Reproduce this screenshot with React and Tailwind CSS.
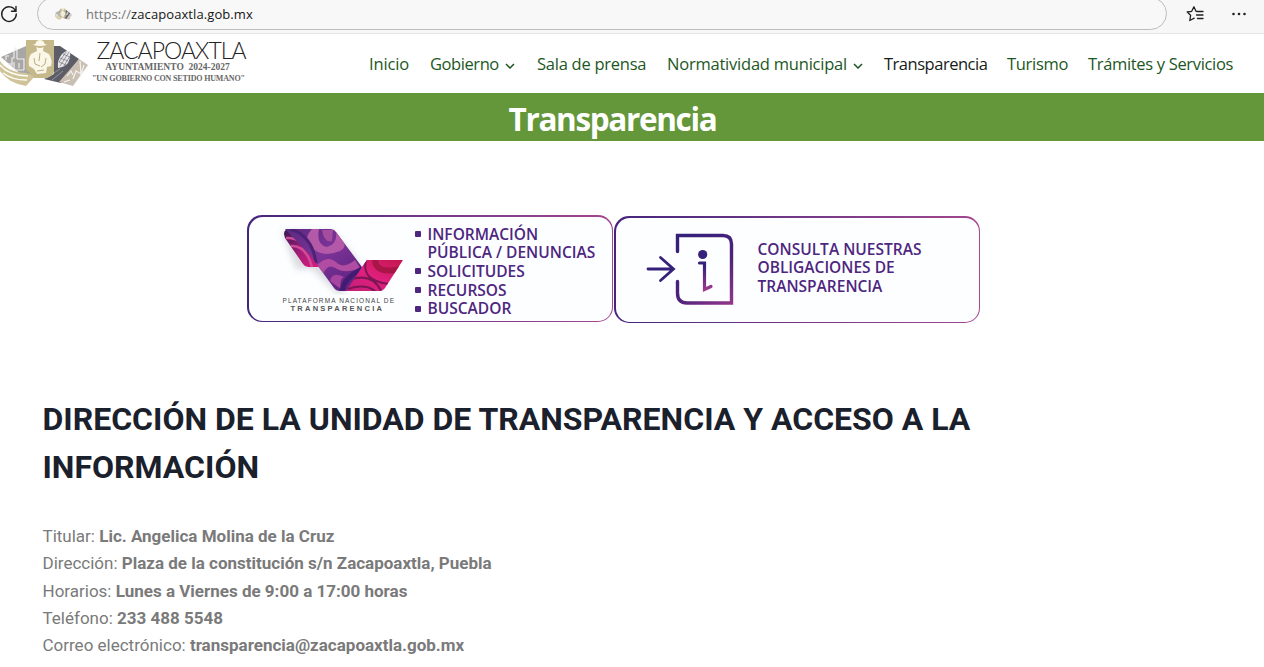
import React from "react";

const NAV = [
  { label: "Inicio", cls: "w-[61px] tracking-[-0.15px]" },
  { label: "Gobierno", cls: "w-[107px] tracking-[-0.42px]", menu: true },
  { label: "Sala de prensa", cls: "w-[130px] tracking-[-0.25px]" },
  { label: "Normatividad municipal", cls: "w-[217px] tracking-[-0.22px]", menu: true },
  { label: "Transparencia", cls: "w-[123px] tracking-[-0.48px]", active: true },
  { label: "Turismo", cls: "w-[81px] tracking-[-0.3px]" },
  { label: "Trámites y Servicios", cls: "w-[176px] tracking-[-0.33px]" },
];

const INFO = [
  ["Titular:", "Lic. Angelica Molina de la Cruz"],
  ["Dirección:", "Plaza de la constitución s/n Zacapoaxtla, Puebla"],
  ["Horarios:", "Lunes a Viernes de 9:00 a 17:00 horas"],
  ["Teléfono:", "233 488 5548"],
  ["Correo electrónico:", "transparencia@zacapoaxtla.gob.mx"],
];

function Emblem({ className }) {
  return (
    <svg viewBox="0 0 88 50" className={className} preserveAspectRatio="none">
      <path d="M1 20 L26 9 V31 L34 40 L24 40 Z" fill="#a8a7a6" />
      <path d="M0 24 Q7 35 26 36 L35 39 L26 49 Q8 46 0 34 Z" fill="#cfc39a" />
      <path d="M0 28 Q8 38 28 39 M3 36 Q12 43 27 43" stroke="#fffdf4" strokeWidth="1.5" fill="none" />
      <path d="M6 23 V19 H9 M12 29 V21 H14 V14 L15.500 11 L17 14 V22 M17 22 H24 V33 M14 25 V32 M19 26 V31 M8 27 H12 M15 33 H24" stroke="#f1f0ee" strokeWidth="1.100" fill="none" />
      <path d="M54 9 L60 9 L79 22 L61 46 L44 42 L54 37 Z" fill="#5c5d66" />
      <path d="M79 22 L88 28 L73 49 L59 45 Z" fill="#c9bfb3" />
      <path d="M80 24 L81 37 L76 34 L73 42 M67 39 L71 34 L73 38 M64 45 L70 43 M84 28 L80 41" stroke="#f6f2ed" strokeWidth="1.200" fill="none" />
      <path d="M46 41 L60 32 M52 43 L63 34" stroke="#a9a9af" strokeWidth="0.700" />
      <path d="M58 31 Q57 23 62 17 Q66 13 70 14 Q71 20 68 26 Q65 30 58 31 Z" fill="#e6e6e8" />
      <path d="M60 21 L68 24 M63 17 L70 20 M59 25 L66 28 M60 29 L69 15 M59 25 L66 15 M64 29 L70 19" stroke="#77777f" strokeWidth="0.700" />
      <path d="M26 3 H54 V35 Q52 39 47 41 H34 L26 32 Z" fill="#c5b98c" />
      <path d="M33 8 Q36 7 37 4 Q40 2 43 4 Q44 7 47 8 Q40 10 33 8 Z" fill="#fbf8ea" />
      <path d="M36.500 10 Q40 12 43.500 10 L43 14 L49 17 Q53 24 51 29 L47 30 L46 36 L37 37 L34 32 L29 29 Q28 21 31 17 L37 14 Z" fill="#faf7e8" />
      <path d="M40 16 L39 24 M34 21 L35 27 L40 29 M46 21 L45 27 L41 30 M37 34 L44 33" stroke="#bcae82" strokeWidth="1" fill="none" />
    </svg>
  );
}

function PlatformMark() {
  return (
    <svg viewBox="0 0 130 72" className="h-[72px] w-[130px]">
      <defs>
        <linearGradient id="band" x1="0" y1="0" x2="1" y2="1">
          <stop offset="0" stopColor="#5a2a80" />
          <stop offset="0.45" stopColor="#7c3397" />
          <stop offset="1" stopColor="#57207c" />
        </linearGradient>
        <linearGradient id="tail" x1="0" y1="0" x2="1" y2="1">
          <stop offset="0" stopColor="#35164f" />
          <stop offset="0.5" stopColor="#a31e78" />
          <stop offset="1" stopColor="#e51a7a" />
        </linearGradient>
        <linearGradient id="wing" x1="1" y1="0" x2="0" y2="1">
          <stop offset="0" stopColor="#c3174f" />
          <stop offset="0.5" stopColor="#e0207d" />
          <stop offset="1" stopColor="#c01f78" />
        </linearGradient>
        <clipPath id="bandClip"><path d="M9 6 H54 Q58 6 60 9 L86 44 L70 68 H64 Q60 68 58 65 L34 32 Z" /></clipPath>
        <clipPath id="wingClip"><path d="M91 37 H127 L109 65 Q107 68 103 68 H65 Q70 66 74 60 Z" /></clipPath>
        <filter id="soft" x="-20%" y="-20%" width="140%" height="140%"><feGaussianBlur stdDeviation="3" /></filter>
      </defs>
      <path d="M6 8 L56 8 L84 40 L68 70 H60 L36 46 H20 Z" fill="#b9b9c2" opacity="0.5" filter="url(#soft)" />
      <path d="M8 11 Q8 6 14 6 L48 44 H32 Q29 44 27 41 L9 15 Z" fill="url(#tail)" />
      <path d="M15 23 Q30 22 36 44 M10 15 Q26 14 34 30" stroke="#d04a9a" strokeWidth="2.500" fill="none" />
      <path d="M91 37 H127 L109 65 Q107 68 103 68 H65 Q70 66 74 60 Z" fill="url(#wing)" />
      <g clipPath="url(#wingClip)" fill="none">
        <path d="M99 35 Q98 52 126 46" stroke="#a81547" strokeWidth="6" />
        <path d="M76 56 Q98 50 106 70 M90 37 Q85 58 113 61 M72 66 Q90 60 100 69" stroke="#7d1555" strokeWidth="2" />
      </g>
      <path d="M9 6 H54 Q58 6 60 9 L86 44 L70 68 H64 Q60 68 58 65 L34 32 Z" fill="url(#band)" />
      <g clipPath="url(#bandClip)">
        <path d="M36 6 Q26 17 36 25 Q47 35 64 28 Q72 24 66 16 L60 8 Q62 21 51 24 Q40 22 43 6 Z" fill="#b458a8" />
        <path d="M46 7 Q48 20 56 18 L57 7 Z" fill="#a54c9f" />
        <path d="M41 42 Q52 31 61 40 Q68 46 79 37 L84 45 Q70 51 61 46 Q52 39 47 51 Z" fill="#b04da2" />
        <path d="M54 58 Q56 48 68 54 Q63 56 65 66 Z" fill="#a744a0" />
        <path d="M14 6 Q36 12 40 40" stroke="#4d2175" strokeWidth="3" fill="none" />
        <path d="M66 68 Q68 55 86 46" stroke="#431b70" strokeWidth="5" fill="none" />
      </g>
    </svg>
  );
}

function ConsultIcon() {
  return (
    <svg viewBox="0 0 90 74" className="h-[74px] w-[90px]" fill="none" strokeLinecap="round">
      <defs>
        <linearGradient id="frame" gradientUnits="userSpaceOnUse" x1="38" y1="10" x2="92" y2="76">
          <stop offset="0" stopColor="#35207a" />
          <stop offset="0.5" stopColor="#4f237c" />
          <stop offset="1" stopColor="#a03a8c" />
        </linearGradient>
        <linearGradient id="letter" gradientUnits="userSpaceOnUse" x1="56" y1="18" x2="62" y2="58">
          <stop offset="0.4" stopColor="#35207a" />
          <stop offset="1" stopColor="#a03a8c" />
        </linearGradient>
      </defs>
      <path d="M31.500 19.500 V3.500 H77 Q85.500 3.500 85.500 12 V71 H41 Q31.500 71 31.500 61 V49.500" stroke="url(#frame)" strokeWidth="3.400" />
      <path d="M2 37 H27 M14.500 25.500 L27.500 37 L14.500 48.500" stroke="#35207a" strokeWidth="2.800" />
      <circle cx="56.700" cy="22.500" r="4.600" fill="#35207a" />
      <path d="M53.500 31 H58.500 V57.500 L65 54.500" stroke="url(#letter)" strokeWidth="3.200" />
    </svg>
  );
}

const CARD = "rounded-[15px] bg-linear-to-r from-[#45257c] to-[#a3478f] p-[1.5px]";

export default function App() {
  return (
    <div className="flex h-[667px] w-[1264px] flex-col overflow-hidden bg-white">
      <div className="h-[34px] shrink-0 overflow-hidden border-b border-[#e6e6e6] bg-[#f7f7f7]">
        <div className="-mt-[3px] flex h-[33px] items-center">
          <svg viewBox="0 0 20 20" className="h-5 w-5 shrink-0" fill="none" stroke="#222" strokeWidth="1.400" strokeLinecap="round">
            <path d="M15.700 7.200 A7.300 7.300 0 1 0 16.300 10 M16 2.500 V7.200 H11.500" />
          </svg>
          <div className="ml-[17px] flex h-[33px] w-[1130px] shrink-0 items-center rounded-full border border-[#bdbdbd] bg-[#f8f8f8]">
            <Emblem className="ml-[17px] h-[12px] w-[17px]" />
            <p className="ml-[14px] whitespace-nowrap pt-[2px] font-['Open_Sans',sans-serif] text-[13px] tracking-[0.09px] text-[#767676]">
              https://<span className="text-[#161616]">zacapoaxtla.gob.mx</span>
            </p>
          </div>
          <svg viewBox="0 0 20 18" className="ml-[19px] h-[18px] w-5 shrink-0" fill="none" stroke="#222" strokeWidth="1.300" strokeLinejoin="round" strokeLinecap="round">
            <path d="M11.500 6.500 L10 6.300 L7.900 1.800 L5.700 6.300 L1.200 7 L4.600 10.300 L3.800 15.500 L8.200 13.200 M12 6.500 H17 M10.500 10 H17 M11.500 13.500 H17" />
          </svg>
          <svg viewBox="0 0 16 4" className="ml-[25px] h-1 w-4 shrink-0" fill="#222">
            <circle cx="2.500" cy="2" r="1.300" /><circle cx="8" cy="2" r="1.300" /><circle cx="13.500" cy="2" r="1.300" />
          </svg>
        </div>
      </div>

      <header className="flex h-[59px] shrink-0 items-start">
        <Emblem className="mt-[3px] h-[50px] w-[88px] shrink-0" />
        <div className="flex w-[281px] shrink-0 flex-col pl-1 pt-[4px]">
          <span className="w-[158px] whitespace-nowrap text-center font-['Lato',sans-serif] text-[23px] font-light leading-[24px] tracking-[-0.95px] text-[#222]">ZACAPOAXTLA</span>
          <span className="w-[151px] whitespace-nowrap text-center font-['Liberation_Serif',serif] text-[9.500px] font-bold leading-[11px] text-[#666]">AYUNTAMIENTO&nbsp; 2024-2027</span>
          <span className="w-[154px] whitespace-nowrap font-['Liberation_Serif',serif] text-[8px] font-bold leading-[11px] tracking-[-0.16px] text-[#666]">"UN GOBIERNO CON SETIDO HUMANO"</span>
        </div>
        <nav className="mt-[17.500px] flex shrink-0 font-['Open_Sans',sans-serif] text-[16.500px] leading-6">
          {NAV.map((n) => (
            <a key={n.label} className={`flex shrink-0 items-center whitespace-nowrap ${n.cls} ${n.active ? "text-[#161c19]" : "text-[#1c5723]"}`}>
              {n.label}
              {n.menu && (
                <svg viewBox="0 0 10 6" className="ml-[6px] mt-[4px] h-[6px] w-[10px]" fill="none" stroke="currentColor" strokeWidth="1.500"><path d="M1 1 L5 5 L9 1" /></svg>
              )}
            </a>
          ))}
        </nav>
      </header>

      <div className="flex h-12 shrink-0 items-center justify-center bg-[#639739] pr-[39px]">
        <h1 className="pt-[3px] font-['Open_Sans',sans-serif] text-[31.500px] font-bold leading-none tracking-[-1.35px] text-white">Transparencia</h1>
      </div>

      <section className="flex gap-[1px] pl-[247px] pt-[74px] font-['Open_Sans',sans-serif] text-[15.500px] font-semibold text-[#4e267f]">
        <div className={`h-[107px] w-[366px] ${CARD}`}>
          <div className="flex h-full rounded-[14px] bg-[#fdfeff]">
            <div className="flex w-[166px] flex-col items-end pt-[6px]">
              <div className="-mr-[-9px]"><PlatformMark /></div>
              <p className="mr-[17px] mt-[2px] w-[115px] whitespace-nowrap font-['Liberation_Sans',sans-serif] text-[6.500px] font-normal leading-[8px] tracking-[1.100px] text-[#444]">PLATAFORMA NACIONAL DE</p>
              <p className="mr-[9px] w-[115px] whitespace-nowrap font-['Liberation_Sans',sans-serif] text-[7.500px] font-bold leading-[7px] tracking-[2.250px] text-[#555]">TRANSPARENCIA</p>
            </div>
            <ul className="pt-[8px] leading-[18.700px]">
              {["INFORMACIÓN", "PÚBLICA / DENUNCIAS", "SOLICITUDES", "RECURSOS", "BUSCADOR"].map((t, i) => (
                <li key={t} className="flex items-center whitespace-nowrap">
                  <i className={`mr-[7px] h-[6px] w-[6px] rounded-[1px] ${i === 1 ? "" : "bg-[#4e267f]"}`} />
                  {t}
                </li>
              ))}
            </ul>
          </div>
        </div>
        <div className={`mt-[1px] h-[107px] w-[366px] ${CARD}`}>
          <div className="flex h-full items-start rounded-[14px] bg-[#fdfeff] pl-[30px] pt-[14px]">
            <ConsultIcon />
            <p className="ml-[22px] mt-[8px] whitespace-nowrap leading-[18.700px]">CONSULTA NUESTRAS<br />OBLIGACIONES DE<br />TRANSPARENCIA</p>
          </div>
        </div>
      </section>

      <main className="pl-[42.500px] pt-[72px] font-['Roboto',sans-serif]">
        <h2 className="whitespace-nowrap text-[32px] font-bold leading-[48px] text-[#1a202c]">
          DIRECCIÓN DE LA UNIDAD DE TRANSPARENCIA Y ACCESO A LA<br />INFORMACIÓN
        </h2>
        <div className="mt-[32.200px] text-[17px] leading-[27.200px] text-[#7a7a7a]">
          {INFO.map(([k, v]) => (
            <p key={k} className="whitespace-nowrap">{k} <strong className="font-bold">{v}</strong></p>
          ))}
        </div>
      </main>
    </div>
  );
}
